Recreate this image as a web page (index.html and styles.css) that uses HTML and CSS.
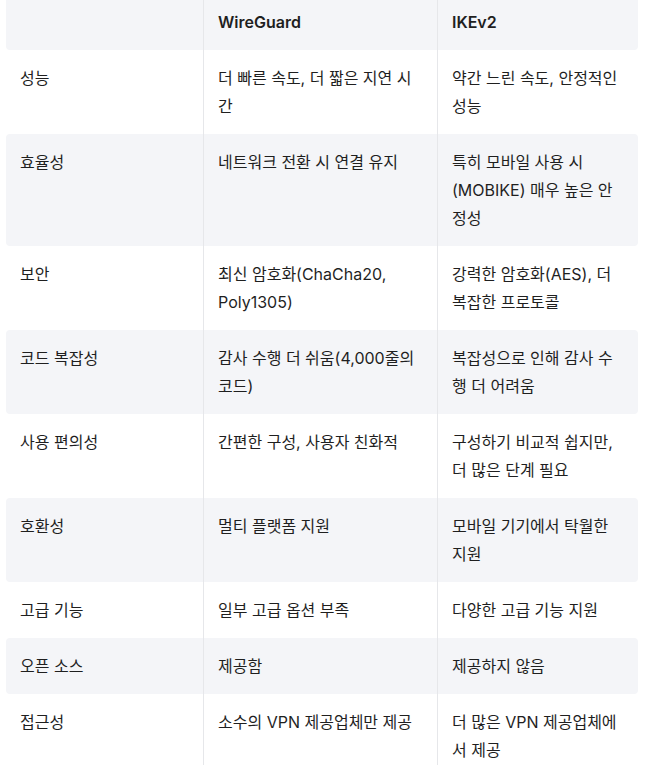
FILE: index.html
```html
<!DOCTYPE html>
<html lang="ko">
<head>
<meta charset="utf-8">
<link rel="stylesheet" href="styles.css">
</head>
<body>
<div class="wrap">
<table class="cmp">
<colgroup><col class="c1"><col class="c2"><col class="c3"></colgroup>
<thead>
<tr><th></th><th>WireGuard</th><th>IKEv2</th></tr>
</thead>
<tbody>
<tr><td>성능</td><td>더 빠른 속도, 더 짧은 지연 시간</td><td>약간 느린 속도, 안정적인 성능</td></tr>
<tr><td>효율성</td><td>네트워크 전환 시 연결 유지</td><td>특히 모바일 사용 시 (MOBIKE) 매우 높은 안정성</td></tr>
<tr><td>보안</td><td>최신 암호화(ChaCha20, Poly1305)</td><td>강력한 암호화(AES), 더 복잡한 프로토콜</td></tr>
<tr><td>코드 복잡성</td><td>감사 수행 더 쉬움(4,000줄의 코드)</td><td>복잡성으로 인해 감사 수행 더 어려움</td></tr>
<tr><td>사용 편의성</td><td>간편한 구성, 사용자 친화적</td><td>구성하기 비교적 쉽지만, 더 많은 단계 필요</td></tr>
<tr><td>호환성</td><td>멀티 플랫폼 지원</td><td>모바일 기기에서 탁월한 지원</td></tr>
<tr><td>고급 기능</td><td>일부 고급 옵션 부족</td><td>다양한 고급 기능 지원</td></tr>
<tr><td>오픈 소스</td><td>제공함</td><td>제공하지 않음</td></tr>
<tr><td>접근성</td><td>소수의 VPN 제공업체만 제공</td><td>더 많은 VPN 제공업체에서 제공</td></tr>
</tbody>
</table>
</div>
</body>
</html>
```
FILE: styles.css
```css
html, body {
  margin: 0;
  padding: 0;
  background: #ffffff;
}
.wrap {
  margin-top: -6px;
  padding-left: 6px;
}
.cmp {
  border-collapse: separate;
  border-spacing: 0;
  table-layout: fixed;
  width: 632px;
  font-family: "Inter", "Noto Sans CJK KR", sans-serif;
  font-size: 16px;
  line-height: 28px;
  color: #1f1f1f;
}
.c1 { width: 197px; }
.c2 { width: 234px; }
.c3 { width: 201px; }
.cmp th, .cmp td {
  padding: 14px;
  text-align: left;
  vertical-align: top;
}
.cmp th {
  font-weight: 600;
}
.cmp th + th, .cmp td + td {
  border-left: 1px solid #e6e7ea;
}
.cmp thead tr th, .cmp tbody tr:nth-child(even) td {
  background: #f4f5f8;
}
.cmp tr > :first-child { border-radius: 4px 0 0 4px; }
.cmp tr > :last-child { border-radius: 0 4px 4px 0; }
```
